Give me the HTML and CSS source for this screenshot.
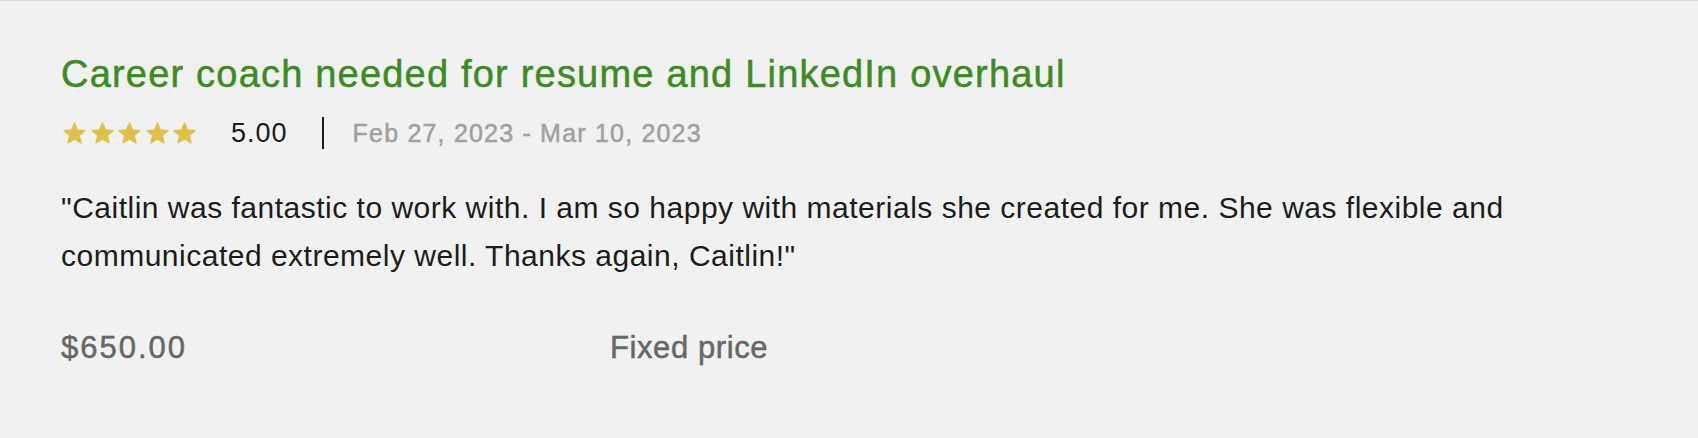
FILE: index.html
```html
<!DOCTYPE html>
<html lang="en">
<head>
<meta charset="utf-8">
<title>Review</title>
<link rel="stylesheet" href="styles.css">
</head>
<body>
<section class="card">
  <h2 class="title">Career coach needed for resume and LinkedIn overhaul</h2>
  <div class="meta">
    <div class="stars" aria-label="5 stars">
      <svg class="star" viewBox="0 0 24 24"><path d="M12 17.27L18.18 21l-1.64-7.03L22 9.24l-7.19-.61L12 2 9.19 8.63 2 9.24l5.46 4.73L5.820 21z"/></svg>
      <svg class="star" viewBox="0 0 24 24"><path d="M12 17.27L18.18 21l-1.64-7.03L22 9.24l-7.19-.61L12 2 9.19 8.63 2 9.24l5.46 4.73L5.82 21z"/></svg>
      <svg class="star" viewBox="0 0 24 24"><path d="M12 17.27L18.18 21l-1.64-7.03L22 9.24l-7.19-.61L12 2 9.19 8.63 2 9.24l5.46 4.73L5.82 21z"/></svg>
      <svg class="star" viewBox="0 0 24 24"><path d="M12 17.27L18.18 21l-1.64-7.03L22 9.24l-7.19-.61L12 2 9.19 8.63 2 9.24l5.46 4.73L5.82 21z"/></svg>
      <svg class="star" viewBox="0 0 24 24"><path d="M12 17.27L18.18 21l-1.64-7.03L22 9.24l-7.19-.61L12 2 9.19 8.63 2 9.24l5.46 4.73L5.82 21z"/></svg>
    </div>
    <span class="score">5.00</span>
    <span class="divider"></span>
    <span class="dates">Feb 27, 2023 - Mar 10, 2023</span>
  </div>
  <p class="review">"Caitlin was fantastic to work with. I am so happy with materials she created for me. She was flexible and communicated extremely well. Thanks again, Caitlin!"</p>
  <div class="price-row">
    <span class="amount">$650.00</span>
    <span class="type">Fixed price</span>
  </div>
</section>
</body>
</html>
```
FILE: styles.css
```css
html, body {
  margin: 0;
  padding: 0;
  background: #f1f1f1;
}
body {
  font-family: "Liberation Sans", Arial, sans-serif;
  height: 438px;
  border-top: 1px solid #d6d6d6;
  box-sizing: border-box;
}
.card {
  padding: 51px 61px 0 61px;
}
.title {
  margin: 0;
  font-size: 38px;
  line-height: 44px;
  font-weight: 400;
  letter-spacing: 1.2px;
  color: #3e8a25;
  -webkit-text-stroke: 0.5px #3e8a25;
}
.meta {
  display: flex;
  align-items: center;
  margin-top: 21px;
  height: 32px;
}
.stars {
  display: flex;
  gap: 2.5px;
  margin-left: 1px;
}
.star {
  width: 25px;
  height: 25px;
  fill: #dfc04a;
  stroke: #dfc04a;
  stroke-width: 1.4;
  stroke-linejoin: round;
}
.score {
  margin-left: 34px;
  font-size: 27px;
  letter-spacing: 1px;
  color: #1c1c1c;
}
.divider {
  width: 2px;
  height: 32px;
  background: #1c1c1c;
  margin: 0 29px 0 34px;
}
.dates {
  font-size: 25px;
  letter-spacing: 1.2px;
  color: #a0a0a0;
  -webkit-text-stroke: 0.5px #a0a0a0;
}
.review {
  margin: 35px 0 0 0;
  font-size: 30px;
  line-height: 48px;
  letter-spacing: 0.5px;
  color: #1c1c1c;
  max-width: 1490px;
}
.price-row {
  display: grid;
  grid-template-columns: 549px auto;
  margin-top: 50px;
  font-size: 31px;
  color: #676767;
  -webkit-text-stroke: 0.5px #676767;
}
.amount {
  letter-spacing: 2px;
}
.type {
  letter-spacing: 0.6px;
}
```
